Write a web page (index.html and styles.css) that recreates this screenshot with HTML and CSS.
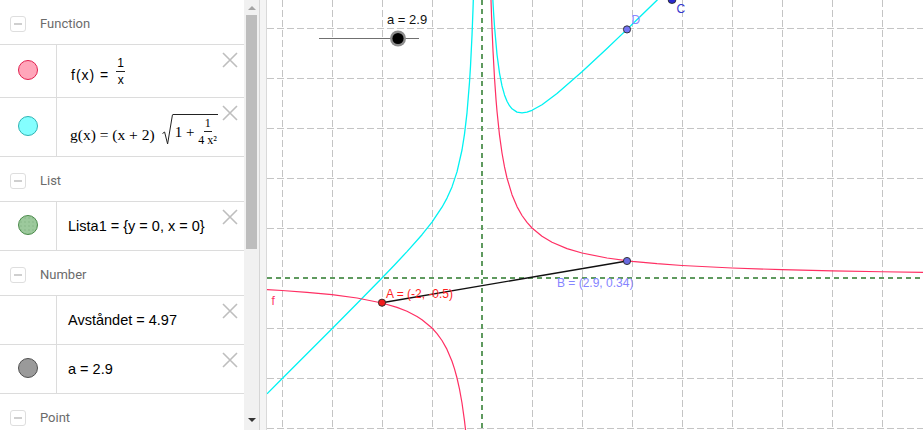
FILE: index.html
```html
<!DOCTYPE html>
<html>
<head>
<meta charset="utf-8">
<title>GeoGebra</title>
<link rel="stylesheet" href="styles.css">
</head>
<body>
<div class="algebra">
  <div class="group"><span class="toggle"></span><span class="gname">Function</span></div>
  <div class="item h53">
    <div class="dotcol"><span class="dot dot-f"></span></div>
    <div class="expr sans">
      <span class="fx">f(x) =</span>
      <span class="frac sm"><span class="num">1</span><span class="den">x</span></span>
    </div>
    <svg class="close" viewBox="0 0 16 16"><path d="M1 1L15 15M15 1L1 15"/></svg>
  </div>
  <div class="item h59">
    <div class="dotcol"><span class="dot dot-g"></span></div>
    <div class="expr serif gexpr">
      <span class="gx">g(x) = (x + 2)</span>
      <span class="sqrt">
        <svg class="rad" width="11" height="31" viewBox="0 0 11 31"><path d="M0.5 19.5L2.6 18L5.6 30L10.5 0.5"/></svg>
        <span class="radicand"><span class="one">1 +</span><span class="frac xs"><span class="num">1</span><span class="den">4 x²</span></span></span>
      </span>
    </div>
    <svg class="close" viewBox="0 0 16 16"><path d="M1 1L15 15M15 1L1 15"/></svg>
  </div>
  <div class="group"><span class="toggle"></span><span class="gname">List</span></div>
  <div class="item h49">
    <div class="dotcol"><span class="dot dot-l"></span></div>
    <div class="expr sans big">Lista1 = {y = 0, x = 0}</div>
    <svg class="close" viewBox="0 0 16 16"><path d="M1 1L15 15M15 1L1 15"/></svg>
  </div>
  <div class="group"><span class="toggle"></span><span class="gname">Number</span></div>
  <div class="item h49">
    <div class="dotcol"></div>
    <div class="expr sans big">Avståndet = 4.97</div>
    <svg class="close" viewBox="0 0 16 16"><path d="M1 1L15 15M15 1L1 15"/></svg>
  </div>
  <div class="item h49">
    <div class="dotcol"><span class="dot dot-a"></span></div>
    <div class="expr sans big">a = 2.9</div>
    <svg class="close" viewBox="0 0 16 16"><path d="M1 1L15 15M15 1L1 15"/></svg>
  </div>
  <div class="group"><span class="toggle"></span><span class="gname">Point</span></div>
</div>
<div class="scrollbar">
  <span class="sb-up"></span>
  <span class="sb-thumb"></span>
  <span class="sb-space"></span>
  <span class="sb-down"></span>
</div>
<div class="splitter"></div>
<svg class="graph" width="656" height="430" viewBox="267 0 656 430">
  <g class="grid">
    <path d="M282.5 0V430M332.5 0V430M382.5 0V430M432.5 0V430M532.5 0V430M582.5 0V430M632.5 0V430M682.5 0V430M732.5 0V430M782.5 0V430M832.5 0V430M882.5 0V430"/>
    <path d="M267 28.5H923M267 78.5H923M267 128.5H923M267 178.5H923M267 228.5H923M267 328.5H923M267 378.5H923M267 428.5H923"/>
  </g>
  <g class="axes">
    <path d="M267 278H923"/>
    <path d="M482 0V430"/>
  </g>
  <polyline class="curve-g" points="492.5,-7.4 493,2.5 493.5,11.2 494.5,26.5 497,54.5 499.5,73.1 502,85.9 504.5,94.9 507,101.2 509.5,105.7 512,108.8 517,112.1 522,112.9 527,112.1 532,110.3 542,104.7 557,93.5 582,71.8 607,48.5 627,29.4 632,24.5 657,0.2 662,-4.7"/>
  <polyline class="curve-g" points="473.5,-6.3 473,9.4 472,35.6 470.5,66.2 469.5,82.3 467,112.8 464.5,134.1 462,150 457,171.9 452,186.9 447,198.1 442,207.2 432,222.1 422,234.7 407,251.6 394.5,265 382,278 357,303.5 332,328.7 282,378.8 267,393.8"/>
  <polyline class="curve-f" points="491,0 491.5,14.8 492,28 493,50.7 494.5,78 496,99.4 497,111.3 499.5,135.1 502,153 504.5,166.9 507,178 512,194.7 517,206.6 522,215.5 527,222.4 532,228 542,236.3 552,242.3 567,248.6 582,253 607,258 632,261.3 657,263.7 682,265.5 732,268 782,269.7 832,270.9 882,271.75 923,272.3"/>
  <polyline class="curve-f" points="267,289.6 282,290.5 307,292.3 332,294.7 357,298 382,303 397,307.4 407,311.3 417,316.5 422,319.7 432,328 437,333.6 442,340.5 447,349.4 452,361.3 454.5,368.9 457,378 459.5,389.1 462,403 464.5,420.9 466,434"/>
  <line class="seg" x1="382" y1="302.7" x2="627" y2="261"/>
  <line class="slider" x1="319" y1="38.5" x2="419" y2="38.5"/>
  <circle cx="398" cy="38.5" r="8" fill="#8c8c8c"/>
  <circle cx="398" cy="38.5" r="5.6" fill="#000"/>
  <circle class="pt" cx="382" cy="302.7" r="3.6" fill="#f01c1c"/>
  <circle class="pt" cx="627" cy="261" r="3.6" fill="#6a6ae0"/>
  <circle class="pt" cx="627" cy="29.4" r="3.6" fill="#7474f4"/>
  <circle class="pt" cx="672" cy="-0.5" r="4" fill="#2a2ad0"/>
  <text class="lbl lbl-a" x="387" y="23.5" fill="#111">a = 2.9</text>
  <text class="lbl" x="386" y="297.5" fill="#ff1f1f" textLength="67" lengthAdjust="spacing">A = (-2, -0.5)</text>
  <text class="lbl" x="557" y="286.5" fill="#8585ff">B = (2.9, 0.34)</text>
  <text class="lbl" x="631.5" y="24" fill="#8a8aff">D</text>
  <text class="lbl" x="676.5" y="12.5" fill="#3535cc">C</text>
  <text class="lbl" x="271.5" y="305" fill="#ff3366">f</text>
</svg>
</body>
</html>
```
FILE: styles.css
```css
* { box-sizing: border-box; }
html, body { margin: 0; padding: 0; }
body {
  width: 923px;
  height: 430px;
  overflow: hidden;
  display: flex;
  background: #fff;
  font-family: "Liberation Sans", Arial, sans-serif;
  color: #000;
}
.algebra {
  width: 244px;
  flex: none;
  height: 430px;
  overflow: hidden;
}
.group {
  height: 45px;
  border-bottom: 1px solid #dcdcdc;
  display: flex;
  align-items: center;
  padding-top: 4px;
  padding-left: 10px;
}
.toggle {
  width: 16px;
  height: 16px;
  border: 1px solid #dedede;
  border-radius: 3px;
  display: flex;
  align-items: center;
  justify-content: center;
}
.toggle::before {
  content: "";
  width: 8px;
  height: 2px;
  background: #cfcfcf;
}
.gname {
  margin-left: 14px;
  font-family: Roboto, "Liberation Sans", sans-serif;
  font-size: 13px;
  color: #6b6b6b;
  margin-top: -2px;
}
.item {
  display: flex;
  border-bottom: 1px solid #dcdcdc;
}
.h53 { height: 53px; }
.h59 { height: 59px; }
.h49 { height: 49px; }
.dotcol {
  width: 57px;
  flex: none;
  border-right: 1px solid #dcdcdc;
  display: flex;
  align-items: center;
  justify-content: center;
  padding-bottom: 2px;
}
.dot {
  width: 20px;
  height: 20px;
  border-radius: 50%;
  border: 1px solid;
}
.dot-f { background: #ffa6ba; border-color: #e2204f; }
.dot-g { background: #84ffff; border-color: #2fb3b3; }
.dot-l {
  background: radial-gradient(circle, #88b888 0.5px, transparent 0.9px) 0 0 / 4px 4px, #9cc99c;
  border-color: #4b8b4b;
}
.dot-a { background: #9a9a9a; border-color: #505050; }
.expr {
  flex: 1;
  display: flex;
  align-items: center;
  padding-left: 11px;
  white-space: nowrap;
}
.sans { font-family: "Liberation Sans", Arial, sans-serif; }
.serif { font-family: "Liberation Serif", "Times New Roman", serif; }
.big { font-size: 14.5px; }
.fx {
  font-size: 14px;
  letter-spacing: 1px;
  margin-top: 8px;
  margin-left: 3px;
}
.frac {
  display: inline-flex;
  flex-direction: column;
  align-items: center;
  margin-left: 7px;
  line-height: 1;
}
.frac .num {
  padding: 0 1px 2px;
  border-bottom: 1px solid #222;
}
.frac .den { padding-top: 2px; }
.sm { font-size: 12px; }
.xs { font-size: 12px; margin-left: 4px; }
.gexpr { padding-top: 6px; }
.gx { font-size: 15.5px; margin-left: 2px; margin-top: 10px; }
.sqrt {
  display: inline-flex;
  align-items: flex-start;
  margin-left: 7px;
  margin-top: -2px;
}
.rad path { fill: none; stroke: #222; stroke-width: 1; }
.radicand {
  display: inline-flex;
  align-items: center;
  border-top: 1px solid #222;
  padding: 3px 1px 0 2px;
  height: 31px;
}
.one { font-size: 15px; margin-top: 3px; }
.close {
  width: 16px;
  height: 16px;
  flex: none;
  margin-top: 7px;
  margin-right: 6px;
}
.close path { stroke: #bebebe; stroke-width: 1.6; fill: none; }
.scrollbar {
  width: 16px;
  flex: none;
  height: 430px;
  background: #f1f1f1;
  border-right: 1px solid #d6d6d6;
  display: flex;
  flex-direction: column;
  align-items: center;
}
.sb-up {
  margin-top: 6px;
  width: 0;
  height: 0;
  border-left: 4px solid transparent;
  border-right: 4px solid transparent;
  border-bottom: 4px solid #a4a4a4;
}
.sb-thumb {
  margin-top: 5px;
  width: 11px;
  height: 234px;
  background: #bdbdbd;
}
.sb-space { flex: 1; }
.sb-down {
  margin-bottom: 8px;
  width: 0;
  height: 0;
  border-left: 4px solid transparent;
  border-right: 4px solid transparent;
  border-top: 4px solid #333;
}
.splitter {
  width: 7px;
  flex: none;
  height: 430px;
  background: #f4f4f4;
  border-right: 1px solid #d9d9d9;
}
.graph { display: block; flex: none; }
.grid path { stroke: #c4c4c4; stroke-width: 1; stroke-dasharray: 7 3; fill: none; }
.axes path { stroke: #5e9a5e; stroke-width: 2; stroke-dasharray: 5 4; fill: none; }
.curve-f { fill: none; stroke: #ff2f63; stroke-width: 1.2; stroke-linejoin: round; }
.curve-g { fill: none; stroke: #00f2f2; stroke-width: 1.3; stroke-linejoin: round; }
.seg { stroke: #111; stroke-width: 1.4; }
.slider { stroke: #707070; stroke-width: 1; }
.pt { stroke: #2a2a2a; stroke-width: 0.9; }
.lbl { font-family: "Liberation Sans", Arial, sans-serif; font-size: 12px; }
.lbl-a { font-size: 13px; }
```
